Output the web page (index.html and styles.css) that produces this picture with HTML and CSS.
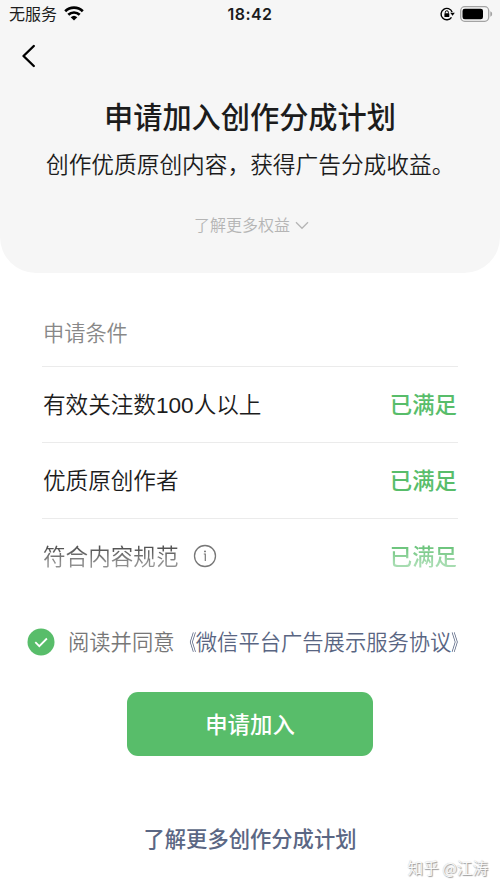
FILE: index.html
```html
<!DOCTYPE html>
<html lang="zh-CN">
<head>
<meta charset="utf-8">
<title>申请加入创作分成计划</title>
<link rel="stylesheet" href="styles.css">
</head>
<body>
<header class="hero">
  <div class="status-bar">
    <div class="carrier">
      <span>无服务</span>
      <svg class="wifi" width="20" height="15" viewBox="0 0 20 15">
        <g fill="none" stroke="#000" stroke-width="2.7">
          <path d="M1.2 5.3a12.6 12.6 0 0 1 17.6 0"/>
          <path d="M4.3 8.8a8.2 8.2 0 0 1 11.4 0"/>
        </g>
        <path d="M6.7 11.2a4.8 4.8 0 0 1 6.6 0L10 14.5z"/>
      </svg>
    </div>
    <div class="clock">18:42</div>
    <div class="indicators">
      <svg width="15" height="14" viewBox="0 0 15 14">
        <path d="M12.1 5.1a5.7 5.7 0 1 0-.6 5.2" fill="none" stroke="#000" stroke-width="1.4"/>
        <path d="M10.2 5.8h4.6l-2.2 2.9z"/>
        <rect x="4.4" y="6.2" width="4.9" height="3.9" rx=".6"/>
        <path d="M5.3 6.5V5.3a1.55 1.55 0 0 1 3.1 0v1.2" fill="none" stroke="#000"/>
      </svg>
      <svg width="33" height="16" viewBox="0 0 33 16">
        <rect x=".7" y=".7" width="28" height="14.6" rx="4" fill="none" stroke="#a3a3a3" stroke-width="1.3"/>
        <rect x="2.5" y="2.7" width="20.5" height="10.6" rx="2.3"/>
        <path d="M30.3 5.3q1.9.7 1.9 2.7t-1.9 2.7z" fill="#a3a3a3"/>
      </svg>
    </div>
  </div>
  <nav class="nav">
    <svg width="15" height="24" viewBox="0 0 15 24"><path d="M12.8 2 2.5 12l10.3 10" fill="none" stroke="#000" stroke-width="2.4" stroke-linecap="round" stroke-linejoin="round"/></svg>
  </nav>
  <h1 class="title">申请加入创作分成计划</h1>
  <p class="subtitle">创作优质原创内容，获得广告分成收益。</p>
  <div class="benefits">
    <span>了解更多权益</span>
    <svg width="14" height="9" viewBox="0 0 14 9"><path d="m1 1.3 6 6 6-6" fill="none" stroke="#b5b5b5" stroke-width="1.3"/></svg>
  </div>
</header>
<main>
  <section class="conditions">
    <h2 class="conditions-title">申请条件</h2>
    <div class="row"><span>有效关注数<span class="number">100</span>人以上</span><span class="met">已满足</span></div>
    <div class="row"><span>优质原创作者</span><span class="met">已满足</span></div>
    <div class="row row-faded">
      <span class="rule">符合内容规范
        <svg width="24" height="24" viewBox="0 0 24 24"><circle cx="12" cy="12" r="10.5" fill="none" stroke="#777" stroke-width="1.3"/><path d="M10.8 10h1.5v7" fill="none" stroke="#777" stroke-width="1.2"/><circle cx="12" cy="7.4" r=".9" fill="#666"/></svg>
      </span>
      <span class="met">已满足</span>
    </div>
  </section>
  <div class="agreement">
    <svg width="28" height="28" viewBox="0 0 28 28"><circle cx="14" cy="14" r="13.5" fill="#58bd6a"/><path d="m8.3 14.2 4 4 7.6-7.7" fill="none" stroke="#fff" stroke-width="1.8"/></svg>
    <p>阅读并同意<a><span class="mark mark-open">《</span>微信平台广告展示服务协议<span class="mark mark-close">》</span></a></p>
  </div>
  <button class="apply">申请加入</button>
  <a class="learn">了解更多创作分成计划</a>
</main>
<footer class="watermark">知乎 @江涛</footer>
</body>
</html>
```
FILE: styles.css
```css
* { box-sizing: border-box; margin: 0; padding: 0; }
html, body { height: 889px; overflow: hidden; }
body {
  display: flex;
  flex-direction: column;
  background: #fff;
  color: #1c1c1c;
  font-family: "Noto Sans CJK SC", sans-serif;
  white-space: nowrap;
  text-spacing-trim: space-all;
}
svg { display: block; flex: none; }
.hero {
  height: 273px;
  background: #f6f6f6;
  border-radius: 0 0 36px 36px;
}
.status-bar {
  display: grid;
  grid-template-columns: 1fr auto 1fr;
  align-items: center;
  height: 28px;
  padding: 0 7px 0 9px;
}
.carrier {
  display: flex;
  align-items: center;
  gap: 7px;
  height: 26px;
  font-size: 16px;
  line-height: 26px;
}
.carrier span { margin-top: -2px; }
.wifi { margin-top: -1px; }
.clock {
  font: 600 16px/28px Inter, sans-serif;
  letter-spacing: .45px;
  margin: -1px 1px 0 -1px;
}
.indicators {
  display: flex;
  align-items: center;
  justify-content: flex-end;
  gap: 5px;
  height: 26px;
  margin-top: -1px;
}
.nav { height: 58px; padding: 16px 0 0 21px; }
.title {
  margin-top: 7px;
  font-size: 29.2px;
  font-weight: 500;
  line-height: 44px;
  text-align: center;
}
.subtitle {
  margin-top: 10px;
  padding-left: 46px;
  font-size: 22.7px;
  font-weight: 350;
  line-height: 34px;
}
.benefits {
  display: flex;
  align-items: center;
  gap: 5px;
  margin-top: 32px;
  padding-left: 194px;
  color: #b5b5b5;
  font-size: 16px;
  font-weight: 350;
  line-height: 26px;
}
.benefits span { margin-top: -2px; }
.conditions { margin: 0 42px; }
.conditions-title {
  height: 93px;
  padding-top: 43px;
  padding-left: 1px;
  color: #888;
  font-size: 21.2px;
  font-weight: 350;
  line-height: 32px;
}
.row {
  display: flex;
  align-items: center;
  justify-content: space-between;
  height: 76px;
  padding: 0 1px 2px;
  border-top: 1px solid #ebebeb;
  font-size: 22.6px;
  font-weight: 350;
}
.number { font-family: "Liberation Sans", sans-serif; }
.met {
  margin-top: -2px;
  color: #58bd6a;
  font-size: 22.4px;
  font-weight: 500;
}
.rule {
  display: flex;
  align-items: center;
  gap: 14px;
  color: transparent;
  background: linear-gradient(#555 30%, #909090 72%);
  -webkit-background-clip: text;
  background-clip: text;
}
.row-faded .met {
  color: transparent;
  background: linear-gradient(#6bc47b 25%, #a6dcb0 75%);
  -webkit-background-clip: text;
  background-clip: text;
}
.agreement {
  display: flex;
  align-items: center;
  gap: 13px;
  height: 32px;
  margin-top: 32px;
  padding-left: 27px;
  color: #777;
  font-size: 21.3px;
  font-weight: 350;
}
.agreement p { margin-top: -3px; }
.agreement a { color: #596582; }
.mark { display: inline-block; transform: scaleX(.65); }
.mark-open { transform-origin: 100% 50%; }
.mark-close { transform-origin: 3% 50%; }
.apply {
  display: block;
  width: 246px;
  height: 64px;
  margin: 34px auto 0 127px;
  padding-bottom: 2px;
  border: 0;
  border-radius: 11px;
  background: #58bd6a;
  color: #fff;
  font: 500 22.4px/60px "Noto Sans CJK SC", sans-serif;
}
.learn {
  display: block;
  margin-top: 66px;
  color: #5b6784;
  font-size: 21.3px;
  font-weight: 500;
  line-height: 32px;
  text-align: center;
}
.watermark {
  margin-top: 1px;
  padding-right: 12px;
  color: #fafafa;
  font-size: 15.6px;
  font-weight: 350;
  line-height: 24px;
  text-align: right;
  text-shadow: 1px 1px 1px #999, 0 0 1px #bbb;
}
```
